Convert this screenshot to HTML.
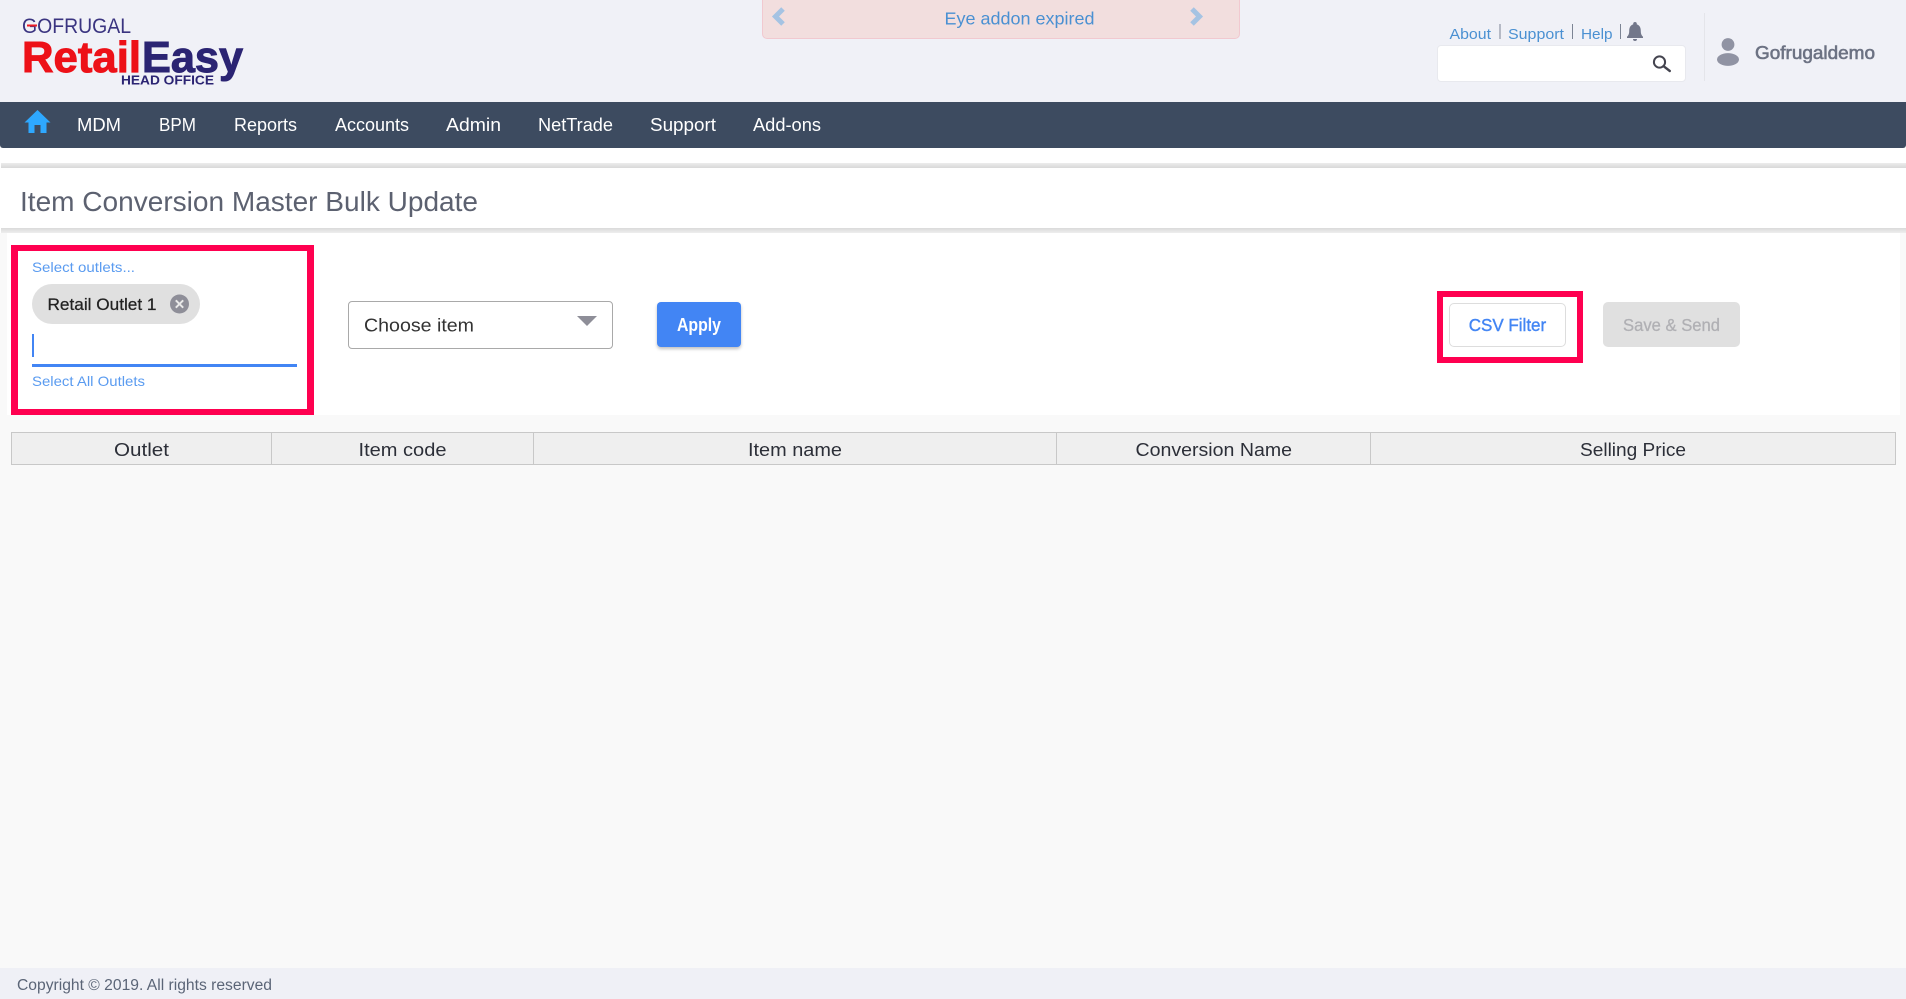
<!DOCTYPE html>
<html>
<head>
<meta charset="utf-8">
<title>Item Conversion Master Bulk Update</title>
<style>
html,body{margin:0;padding:0;width:1906px;height:999px;overflow:hidden;background:#f9f9f9;font-family:"Liberation Sans",sans-serif}
.b{position:absolute;box-sizing:border-box}
svg{position:absolute;left:0;top:0}
text{font-family:"Liberation Sans",sans-serif}
</style>
</head>
<body>
<div class="b" style="left:0;top:0;width:1906px;height:102px;background:#f0f1f7"></div>
<div class="b" style="left:0;top:102px;width:1906px;height:46px;background:#3d4b60;border-radius:0 0 3px 3px"></div>
<div class="b" style="left:0;top:148px;width:1906px;height:85px;background:#fff"></div>
<div class="b" style="left:1px;top:163px;width:1905px;height:5px;background:linear-gradient(#ececec,#d8d8d8)"></div>
<div class="b" style="left:1px;top:228px;width:1905px;height:5px;background:linear-gradient(#dadada,#eeeeee)"></div>
<div class="b" style="left:7px;top:233px;width:1893px;height:182px;background:#fff"></div>
<div class="b" style="left:762px;top:-5px;width:478px;height:44px;background:#f2dede;border:1px solid #f1c9d0;border-radius:5px"></div>
<div class="b" style="left:1437px;top:45px;width:249px;height:37px;background:#fff;border:1px solid #e8e9ee;border-radius:4px"></div>
<div class="b" style="left:1704px;top:13px;width:1px;height:68px;background:#e4e5ea"></div>
<div class="b" style="left:11px;top:245px;width:303px;height:170px;border:6px solid #ff0050;border-left-width:7px;border-right-width:7px"></div>
<div class="b" style="left:32px;top:284px;width:168px;height:40px;background:#e0e0e0;border-radius:20px"></div>
<div class="b" style="left:32px;top:334px;width:2px;height:23px;background:#4285f4"></div>
<div class="b" style="left:32px;top:364px;width:265px;height:3px;background:#4285f4"></div>
<div class="b" style="left:348px;top:301px;width:265px;height:48px;background:#fff;border:1px solid #a9a9a9;border-radius:4px"></div>
<div class="b" style="left:657px;top:302px;width:84px;height:45px;background:#4285f4;border-radius:4px;box-shadow:0 2px 3px rgba(0,0,0,.25)"></div>
<div class="b" style="left:1437px;top:291px;width:146px;height:72px;border:6px solid #ff0050"></div>
<div class="b" style="left:1449px;top:303px;width:117px;height:44px;background:#fff;border:1px solid #ddd;border-radius:5px"></div>
<div class="b" style="left:1603px;top:302px;width:137px;height:45px;background:#e0e0e0;border-radius:5px"></div>
<div class="b" style="left:11px;top:432px;width:1885px;height:33px;background:#efefef;border:1px solid #c8c8c8"></div>
<div class="b" style="left:271px;top:432px;width:1px;height:33px;background:#c8c8c8"></div>
<div class="b" style="left:533px;top:432px;width:1px;height:33px;background:#c8c8c8"></div>
<div class="b" style="left:1056px;top:432px;width:1px;height:33px;background:#c8c8c8"></div>
<div class="b" style="left:1370px;top:432px;width:1px;height:33px;background:#c8c8c8"></div>
<div class="b" style="left:0;top:968px;width:1906px;height:31px;background:#eff0f6"></div>

<svg width="1906" height="999" viewBox="0 0 1906 999" xmlns="http://www.w3.org/2000/svg">
<!-- logo -->
<text x="22" y="33" font-size="21" fill="#3a3480" textLength="109" lengthAdjust="spacingAndGlyphs">GOFRUGAL</text>
<rect x="27" y="24.5" width="10" height="2" fill="#ed1c24"/>
<text x="22" y="72" font-size="44" font-weight="bold" fill="#ed1118" stroke="#ed1118" stroke-width="1" textLength="119" lengthAdjust="spacingAndGlyphs">Retail</text>
<text x="142" y="72" font-size="44" font-weight="bold" fill="#2b2473" stroke="#2b2473" stroke-width="1" textLength="101" lengthAdjust="spacingAndGlyphs">Easy</text>
<text x="121" y="84.5" font-size="12.5" font-weight="bold" fill="#2b2473" textLength="93" lengthAdjust="spacingAndGlyphs">HEAD OFFICE</text>

<!-- alert -->
<path d="M783 9 L775.5 16.5 L783 24" fill="none" stroke="#a5c3e3" stroke-width="5"/>
<path d="M1192 9 L1199.5 16.5 L1192 24" fill="none" stroke="#a5c3e3" stroke-width="5"/>
<text x="944.5" y="24.5" font-size="17.5" fill="#4a90d2" textLength="150" lengthAdjust="spacingAndGlyphs">Eye addon expired</text>

<!-- top right -->
<g font-size="15" fill="#4a90d2">
<text x="1449.5" y="39" textLength="41.5" lengthAdjust="spacingAndGlyphs">About</text>
<text x="1508" y="39" textLength="56" lengthAdjust="spacingAndGlyphs">Support</text>
<text x="1581" y="39" textLength="31.5" lengthAdjust="spacingAndGlyphs">Help</text>
</g>
<g fill="#7c8494">
<rect x="1499.5" y="24" width="1" height="15"/>
<rect x="1572" y="24" width="1" height="15"/>
<rect x="1620" y="24" width="1" height="15"/>
</g>
<path d="M1635 22 a1.8 1.8 0 0 1 1.8 1.8 v.6 c3 .9 4 3.4 4 6.6 c0 3 .8 4.4 2.2 5.8 v1.2 h-16 v-1.2 c1.4-1.4 2.2-2.8 2.2-5.8 c0-3.2 1-5.7 4-6.6 v-.6 a1.8 1.8 0 0 1 1.8-1.8z M1633 39 h4 a2 2 0 0 1 -4 0z" fill="#72778a"/>
<circle cx="1659.5" cy="62" r="5.6" fill="none" stroke="#44444f" stroke-width="2"/>
<path d="M1663.6 66.2 L1669.8 71" stroke="#44444f" stroke-width="2.4" stroke-linecap="round"/>
<circle cx="1728" cy="44.5" r="6.4" fill="#9093a3"/>
<ellipse cx="1728" cy="59.5" rx="11" ry="6.4" fill="#9093a3"/>
<text x="1755" y="59" font-size="18" fill="#6c7283" stroke="#6c7283" stroke-width=".6" textLength="120" lengthAdjust="spacingAndGlyphs">Gofrugaldemo</text>

<!-- nav -->
<path d="M37.5 110 L50.5 122.5 H46.5 V133 H40.5 V125 H34.5 V133 H28.5 V122.5 H24.5 Z" fill="#2ea8ff"/>
<g font-size="18" fill="#fff">
<text x="77" y="131" textLength="44" lengthAdjust="spacingAndGlyphs">MDM</text>
<text x="159" y="131" textLength="37" lengthAdjust="spacingAndGlyphs">BPM</text>
<text x="234" y="131" textLength="63" lengthAdjust="spacingAndGlyphs">Reports</text>
<text x="335" y="131" textLength="74" lengthAdjust="spacingAndGlyphs">Accounts</text>
<text x="446" y="131" textLength="55" lengthAdjust="spacingAndGlyphs">Admin</text>
<text x="538" y="131" textLength="75" lengthAdjust="spacingAndGlyphs">NetTrade</text>
<text x="650" y="131" textLength="66" lengthAdjust="spacingAndGlyphs">Support</text>
<text x="753" y="131" textLength="68" lengthAdjust="spacingAndGlyphs">Add-ons</text>
</g>

<!-- title -->
<text x="20" y="211" font-size="28" fill="#5c6170" textLength="458" lengthAdjust="spacingAndGlyphs">Item Conversion Master Bulk Update</text>

<!-- filters -->
<text x="32" y="272" font-size="14" fill="#5a9bf0" textLength="103" lengthAdjust="spacingAndGlyphs">Select outlets...</text>
<text x="47.5" y="310" font-size="17" fill="#222" stroke="#222" stroke-width=".25" textLength="109" lengthAdjust="spacingAndGlyphs">Retail Outlet 1</text>
<circle cx="179.5" cy="304" r="9.5" fill="#8e8e98"/>
<path d="M175.8 300.3 L183.2 307.7 M183.2 300.3 L175.8 307.7" stroke="#e8e8e8" stroke-width="2"/>
<text x="32" y="386" font-size="14" fill="#5a9bf0" textLength="113" lengthAdjust="spacingAndGlyphs">Select All Outlets</text>
<text x="364" y="331.5" font-size="18" fill="#333" textLength="110" lengthAdjust="spacingAndGlyphs">Choose item</text>
<path d="M577 316 H597 L587 326 Z" fill="#8e8e98"/>
<text x="677" y="331" font-size="18" font-weight="bold" fill="#fff" textLength="44" lengthAdjust="spacingAndGlyphs">Apply</text>
<text x="1468.7" y="331" font-size="17.5" fill="#4285f4" stroke="#4285f4" stroke-width=".4" textLength="77.5" lengthAdjust="spacingAndGlyphs">CSV Filter</text>
<text x="1623" y="331" font-size="17.5" fill="#b0b0b4" stroke="#b0b0b4" stroke-width=".3" textLength="97" lengthAdjust="spacingAndGlyphs">Save &amp; Send</text>

<!-- table head -->
<g font-size="18" fill="#2c2f38">
<text x="114" y="456" textLength="55" lengthAdjust="spacingAndGlyphs">Outlet</text>
<text x="358.5" y="456" textLength="88" lengthAdjust="spacingAndGlyphs">Item code</text>
<text x="748" y="456" textLength="94" lengthAdjust="spacingAndGlyphs">Item name</text>
<text x="1135.5" y="456" textLength="156.5" lengthAdjust="spacingAndGlyphs">Conversion Name</text>
<text x="1580" y="456" textLength="106" lengthAdjust="spacingAndGlyphs">Selling Price</text>
</g>

<!-- footer -->
<text x="17" y="990" font-size="15.5" fill="#5b6577" textLength="255" lengthAdjust="spacingAndGlyphs">Copyright © 2019. All rights reserved</text>
</svg>
</body>
</html>
